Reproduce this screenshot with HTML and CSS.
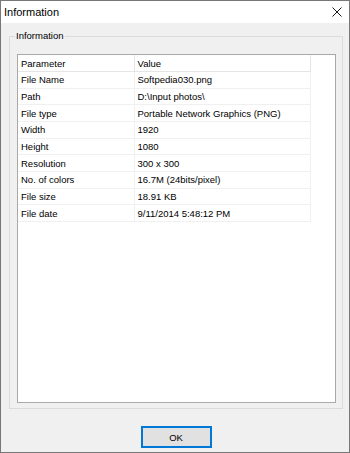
FILE: index.html
```html
<!DOCTYPE html>
<html lang="en">
<head>
    <meta charset="UTF-8">
    <title>Information</title>
    <link rel="stylesheet" href="styles.css">
</head>
<body>

    <!-- DIALOG WINDOW -->
    <div class="dialog">
        <div class="titlebar">
            <span class="title">Information</span>
            <svg class="close" viewBox="0 0 10 10">
                <path d="M0.5 0.5 L9.5 9.5 M9.5 0.5 L0.5 9.5" stroke="#1a1a1a" stroke-width="1" fill="none"/>
            </svg>
        </div>

        <div class="content">
            <fieldset class="group">
                <legend>Information</legend>
                <div class="listview">
                    <table class="grid">
                        <colgroup>
                            <col class="col-param">
                            <col class="col-value">
                        </colgroup>
                        <thead>
                            <tr><th>Parameter</th><th>Value</th></tr>
                        </thead>
                        <tbody>
                            <tr><td>File Name</td><td>Softpedia030.png</td></tr>
                            <tr><td>Path</td><td>D:\Input photos\</td></tr>
                            <tr><td>File type</td><td>Portable Network Graphics (PNG)</td></tr>
                            <tr><td>Width</td><td>1920</td></tr>
                            <tr><td>Height</td><td>1080</td></tr>
                            <tr><td>Resolution</td><td>300 x 300</td></tr>
                            <tr><td>No. of colors</td><td>16.7M (24bits/pixel)</td></tr>
                            <tr><td>File size</td><td>18.91 KB</td></tr>
                            <tr><td>File date</td><td>9/11/2014 5:48:12 PM</td></tr>
                        </tbody>
                    </table>
                </div>
            </fieldset>

            <div class="buttons">
                <button class="ok">OK</button>
            </div>
        </div>
    </div>

</body>
</html>
```

FILE: styles.css
```css
* { margin: 0; padding: 0; box-sizing: border-box; }

body {
    background: #f0f0f0;
    color: #000;
    font-family: "Liberation Sans", Arial, sans-serif;
}

.dialog {
    width: 350px;
    height: 453px;
    border: 1px solid #777;
    background: #f0f0f0;
    display: flex;
    flex-direction: column;
}

.titlebar {
    height: 22px;
    background: #fff;
    display: flex;
    align-items: center;
    justify-content: space-between;
    padding: 0 7px 0 3px;
    font-size: 11px;
}

.close {
    width: 10px;
    height: 10px;
}

.content {
    flex: 1;
    padding: 7px 6px 0 8px;
    display: flex;
    flex-direction: column;
}

/* group box */
.group {
    border: 1px solid #dcdcdc;
    padding: 12px 6px 5px 7px;
    min-width: 0;
}

.group legend {
    font-size: 9.5px;
    line-height: 12px;
    padding: 0 1px;
    margin-left: -2px;
}

/* list view */
.listview {
    height: 349px;
    border: 1px solid #a9a9a9;
    background: #fff;
}

.grid {
    border-collapse: collapse;
    table-layout: fixed;
    width: 292px;
    font-size: 9.5px;
}

.col-param { width: 116px; }
.col-value { width: 176px; }

.grid th,
.grid td {
    height: 16.67px;
    padding: 0 0 0 3px;
    text-align: left;
    font-weight: normal;
    white-space: nowrap;
    border-bottom: 1px solid #f0f0f0;
    border-right: 1px solid #f0f0f0;
}

.grid th {
    border-bottom-color: #e5e5e5;
    border-right-color: #e5e5e5;
}

/* buttons */
.buttons {
    margin-top: 17px;
    display: flex;
    justify-content: center;
}

.ok {
    width: 71px;
    height: 22px;
    border: 2px solid #0078d7;
    background: #e1e1e1;
    color: #000;
    font-family: "Liberation Sans", Arial, sans-serif;
    font-size: 9.5px;
}
```
